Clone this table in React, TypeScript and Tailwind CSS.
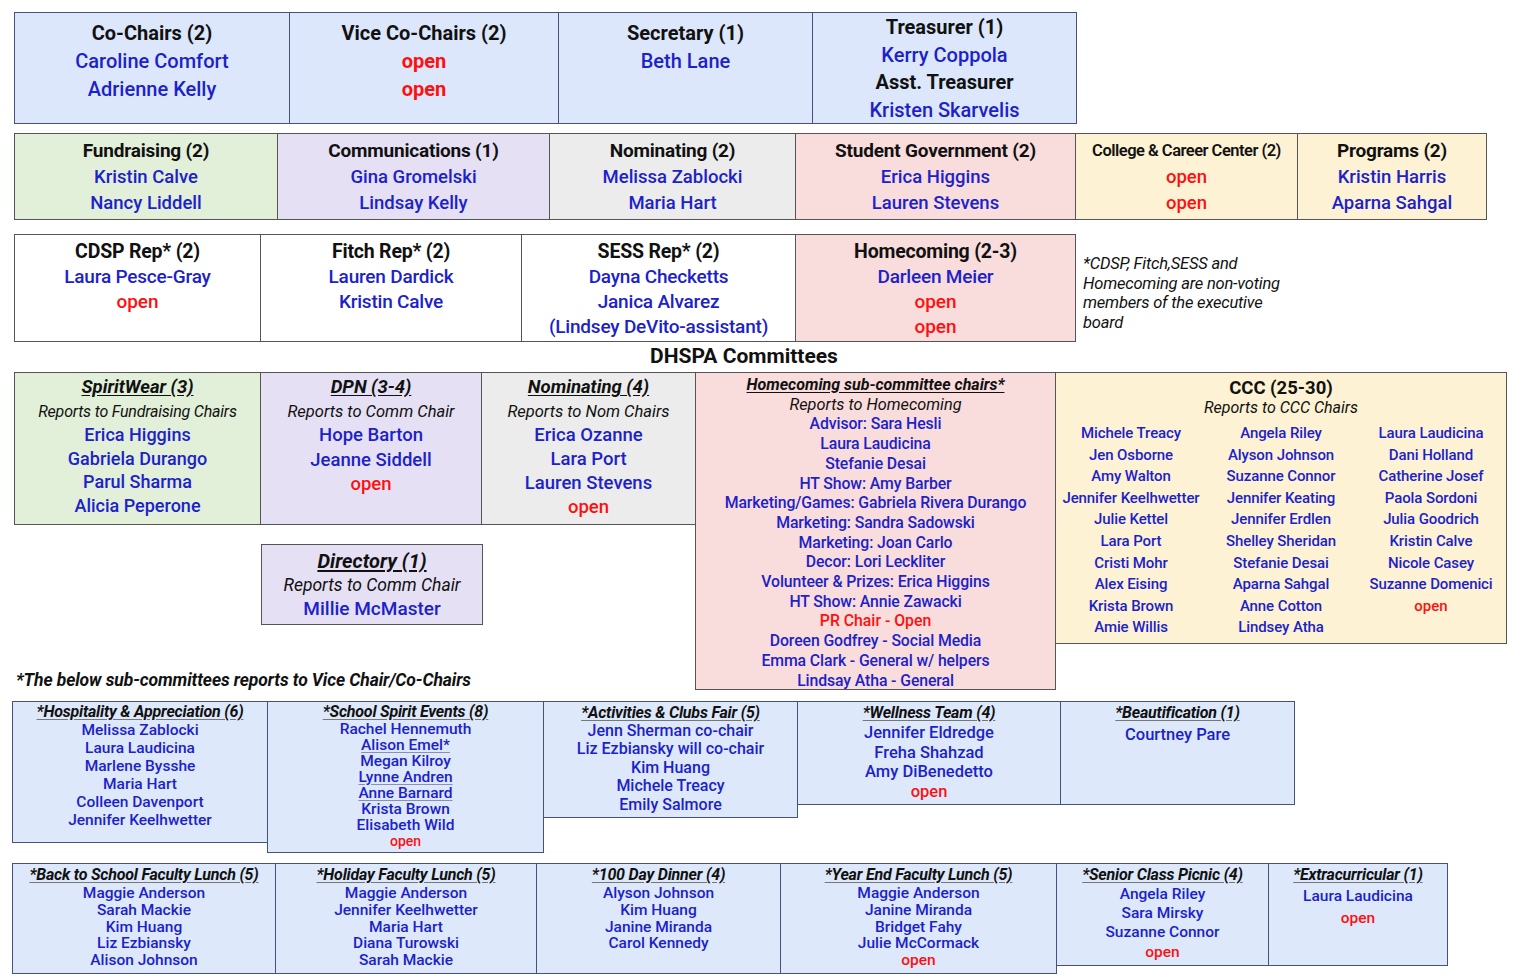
import React from "react";

const NAME = "text-[#1c22c9] font-medium";
const RED = "text-[#ff1010] font-medium";

type L = { t: string; k?: "h" | "n" | "o" | "s" | "u" };

function Lines({ lines, h, n, s, o }: { lines: L[]; h: string; n: string; s?: string; o?: string }) {
  return (
    <>
      {lines.map((l, i) => {
        const k = l.k ?? "n";
        let c = "";
        if (k === "h") c = h;
        else if (k === "s") c = s ?? n;
        else if (k === "o") c = (o ?? n) + " " + RED;
        else if (k === "u") c = n + " " + NAME + " underline decoration-[#8a8fb8] underline-offset-2";
        else c = n + " " + NAME;
        return (
          <div key={i} className={c + " whitespace-nowrap"}>
            {l.t}
          </div>
        );
      })}
    </>
  );
}

const nm = (t: string): L => ({ t });
const op: L = { t: "open", k: "o" };
const hd = (t: string): L => ({ t, k: "h" });
const sb = (t: string): L => ({ t, k: "s" });

export default function App() {
  const top = "border border-[#46527e] bg-[#dce7fb] text-center";
  const gbd = "border border-[#555]";
  const subBox = "border border-[#46527e] bg-[#dde8fb] text-center";
  const subH = "text-[16px] leading-[18px] font-bold italic underline decoration-[#777] underline-offset-2 text-[#111] tracking-[-0.2px]";

  return (
    <div className="w-[1521px] h-[979px] bg-white overflow-hidden font-['Roboto','Liberation_Sans',sans-serif] text-[#111]">
      {/* Row 1 */}
      <div className="flex ml-[14px] pt-[12px]">
        <div className={top + " w-[276px] h-[112px] pt-[6px]"}>
          <Lines h="text-[20px] leading-[28px] font-bold" n="text-[20px] leading-[28px]" lines={[hd("Co-Chairs (2)"), nm("Caroline Comfort"), nm("Adrienne Kelly")]} />
        </div>
        <div className={top + " -ml-px w-[270px] h-[112px] pt-[6px]"}>
          <Lines h="text-[20px] leading-[28px] font-bold" n="text-[20px] leading-[28px]" o="text-[20px] leading-[28px] !font-bold" lines={[hd("Vice Co-Chairs (2)"), op, op]} />
        </div>
        <div className={top + " -ml-px w-[255px] h-[112px] pt-[6px]"}>
          <Lines h="text-[20px] leading-[28px] font-bold" n="text-[20px] leading-[28px]" lines={[hd("Secretary (1)"), nm("Beth Lane")]} />
        </div>
        <div className={top + " -ml-px w-[265px] h-[112px] pt-[1px]"}>
          <Lines h="text-[20px] leading-[27.5px] font-bold" n="text-[20px] leading-[27.5px]" lines={[hd("Treasurer (1)"), nm("Kerry Coppola"), hd("Asst. Treasurer"), nm("Kristen Skarvelis")]} />
        </div>
      </div>

      {/* Row 2 */}
      <div className="flex ml-[14px] mt-[9px] items-start">
        {[
          { w: "w-[264px]", bg: "bg-[#e2efd9]", l: [hd("Fundraising (2)"), nm("Kristin Calve"), nm("Nancy Liddell")] },
          { w: "w-[273px]", bg: "bg-[#e5e0f4]", l: [hd("Communications (1)"), nm("Gina Gromelski"), nm("Lindsay Kelly")] },
          { w: "w-[247px]", bg: "bg-[#ececec]", l: [hd("Nominating (2)"), nm("Melissa Zablocki"), nm("Maria Hart")] },
          { w: "w-[281px]", bg: "bg-[#f9dcdc]", l: [hd("Student Government (2)"), nm("Erica Higgins"), nm("Lauren Stevens")] },
        ].map((b, i) => (
          <div key={i} className={gbd + " " + b.bg + " " + b.w + (i > 0 ? " -ml-px" : "") + " h-[87px] pt-[4px] text-center"}>
            <Lines h="text-[19px] leading-[26px] font-bold tracking-[-0.2px]" n="text-[18.5px] leading-[26px]" o="text-[18.5px] leading-[26px]" lines={b.l} />
          </div>
        ))}
        <div className={gbd + " bg-[#fdf2d4] w-[223px] -ml-px h-[87px] pt-[4px] text-center"}>
          <Lines h="text-[16.5px] leading-[26px] font-semibold tracking-[-0.5px]" n="text-[18.5px] leading-[26px]" o="text-[18.5px] leading-[26px]" lines={[hd("College & Career Center (2)"), op, op]} />
        </div>
        <div className={gbd + " bg-[#fdf2d4] w-[190px] -ml-px h-[87px] pt-[4px] text-center"}>
          <Lines h="text-[19px] leading-[26px] font-bold tracking-[-0.2px]" n="text-[18.5px] leading-[26px]" lines={[hd("Programs (2)"), nm("Kristin Harris"), nm("Aparna Sahgal")]} />
        </div>
      </div>

      {/* Row 3 */}
      <div className="flex ml-[14px] mt-[14px] items-start">
        {[
          { w: "w-[247px]", bg: "bg-white", l: [hd("CDSP Rep* (2)"), nm("Laura Pesce-Gray"), op] },
          { w: "w-[262px]", bg: "bg-white", l: [hd("Fitch Rep* (2)"), nm("Lauren Dardick"), nm("Kristin Calve")] },
          { w: "w-[275px]", bg: "bg-white", l: [hd("SESS Rep* (2)"), nm("Dayna Checketts"), nm("Janica Alvarez"), nm("(Lindsey DeVito-assistant)")] },
          { w: "w-[281px]", bg: "bg-[#f9dcdc]", l: [hd("Homecoming (2-3)"), nm("Darleen Meier"), op, op] },
        ].map((b, i) => (
          <div key={i} className={gbd + " " + b.bg + " " + b.w + (i > 0 ? " -ml-px" : "") + " h-[108px] pt-[4px] text-center"}>
            <Lines h="text-[19.5px] leading-[25px] font-bold tracking-[-0.2px]" n="text-[19px] leading-[25px] tracking-[-0.2px]" o="text-[19px] leading-[25px]" lines={b.l} />
          </div>
        ))}
        <div className="ml-[7px] mt-[20px] text-[16.5px] leading-[19.5px] italic text-[#111] tracking-[-0.2px]">
          *CDSP, Fitch,SESS and
          <br />
          Homecoming are non-voting
          <br />
          members of the executive
          <br />
          board
        </div>
      </div>

      {/* Title */}
      <div className="w-[1488px] h-[30px] flex items-center justify-center text-[21px] font-bold text-[#111]">
        DHSPA Committees
      </div>

      {/* Committees */}
      <div className="flex items-start ml-[14px]">
        <div className="flex flex-col">
          <div className="flex items-start">
            <div className={gbd + " bg-[#e2efd9] w-[247px] h-[153px] pt-[3px] text-center"}>
              <Lines h="text-[18.5px] leading-[23.6px] font-bold italic underline underline-offset-2" s="text-[16px] leading-[23.6px] italic tracking-[-0.2px]" n="text-[18px] leading-[23.6px]" lines={[hd("SpiritWear (3)"), sb("Reports to Fundraising Chairs"), nm("Erica Higgins"), nm("Gabriela Durango"), nm("Parul Sharma"), nm("Alicia Peperone")]} />
            </div>
            <div className={gbd + " bg-[#e5e0f4] -ml-px w-[222px] h-[153px] pt-[3px] text-center"}>
              <Lines h="text-[18.5px] leading-[23.6px] font-bold italic underline underline-offset-2" s="text-[16.5px] leading-[23.6px] italic" n="text-[18.5px] leading-[24.5px]" o="text-[18.5px] leading-[24.5px]" lines={[hd("DPN (3-4)"), sb("Reports to Comm Chair"), nm("Hope Barton"), nm("Jeanne Siddell"), op]} />
            </div>
            <div className={gbd + " bg-[#ececec] -ml-px w-[215px] h-[153px] pt-[3px] text-center"}>
              <Lines h="text-[18.5px] leading-[23.6px] font-bold italic underline underline-offset-2" s="text-[16.5px] leading-[23.6px] italic" n="text-[18.5px] leading-[24px]" o="text-[18.5px] leading-[24px]" lines={[hd("Nominating (4)"), sb("Reports to Nom Chairs"), nm("Erica Ozanne"), nm("Lara Port"), nm("Lauren Stevens"), op]} />
            </div>
          </div>
          <div className={gbd + " bg-[#e5e0f4] ml-[247px] mt-[19px] w-[222px] h-[81px] pt-[4px] text-center"}>
            <Lines h="text-[20px] leading-[24px] font-bold italic underline underline-offset-2" s="text-[17.5px] leading-[24px] italic" n="text-[19px] leading-[24px]" lines={[hd("Directory (1)"), sb("Reports to Comm Chair"), nm("Millie McMaster")]} />
          </div>
          <div className="ml-[2px] mt-[45px] text-[17.5px] leading-[20px] font-bold italic text-[#111] whitespace-nowrap tracking-[-0.1px]">
            *The below sub-committees reports to Vice Chair/Co-Chairs
          </div>
        </div>
        <div className={gbd + " bg-[#f9dcdc] -ml-px w-[361px] h-[318px] pt-[2px] text-center"}>
          <Lines
            h="text-[16px] leading-[19.7px] font-bold italic underline underline-offset-2"
            s="text-[16.3px] leading-[19.7px] italic"
            n="text-[15.8px] leading-[19.7px] tracking-[-0.1px]"
            o="text-[15.8px] leading-[19.7px]"
            lines={[
              hd("Homecoming sub-committee chairs*"),
              sb("Reports to Homecoming"),
              nm("Advisor: Sara Hesli"),
              nm("Laura Laudicina"),
              nm("Stefanie Desai"),
              nm("HT Show: Amy Barber"),
              nm("Marketing/Games: Gabriela Rivera Durango"),
              nm("Marketing: Sandra Sadowski"),
              nm("Marketing: Joan Carlo"),
              nm("Decor: Lori Leckliter"),
              nm("Volunteer & Prizes: Erica Higgins"),
              nm("HT Show: Annie Zawacki"),
              { t: "PR Chair - Open", k: "o" },
              nm("Doreen Godfrey - Social Media"),
              nm("Emma Clark - General w/ helpers"),
              nm("Lindsay Atha - General"),
            ]}
          />
        </div>
        <div className={gbd + " bg-[#fdf2d4] -ml-px w-[452px] h-[272px] pt-[5px] text-center"}>
          <div className="text-[18.5px] leading-[20px] font-bold">CCC (25-30)</div>
          <div className="text-[16px] leading-[20px] italic">Reports to CCC Chairs</div>
          <div className="grid grid-cols-3 mt-[5px]">
            {[
              ["Michele Treacy", "Jen Osborne", "Amy Walton", "Jennifer Keelhwetter", "Julie Kettel", "Lara Port", "Cristi Mohr", "Alex Eising", "Krista Brown", "Amie Willis"],
              ["Angela Riley", "Alyson Johnson", "Suzanne Connor", "Jennifer Keating", "Jennifer Erdlen", "Shelley Sheridan", "Stefanie Desai", "Aparna Sahgal", "Anne Cotton", "Lindsey Atha"],
              ["Laura Laudicina", "Dani Holland", "Catherine Josef", "Paola Sordoni", "Julia Goodrich", "Kristin Calve", "Nicole Casey", "Suzanne Domenici", "open"],
            ].map((col, ci) => (
              <div key={ci} className="flex flex-col items-center">
                <Lines
                  h=""
                  n="text-[15px] leading-[21.6px] tracking-[-0.1px]"
                  o="text-[15px] leading-[21.6px]"
                  lines={col.map((t) => (t === "open" ? op : nm(t)))}
                />
              </div>
            ))}
          </div>
        </div>
      </div>

      {/* Sub row 1 */}
      <div className="flex items-start ml-[12px] mt-[11px]">
        <div className={subBox + " w-[256px] h-[142px] pt-[1px]"}>
          <Lines h={subH} n="text-[15.5px] leading-[18px]" lines={[hd("*Hospitality & Appreciation (6)"), nm("Melissa Zablocki"), nm("Laura Laudicina"), nm("Marlene Bysshe"), nm("Maria Hart"), nm("Colleen Davenport"), nm("Jennifer Keelhwetter")]} />
        </div>
        <div className={subBox + " -ml-px w-[277px] h-[152px] pt-[1px]"}>
          <Lines h={subH} n="text-[15.5px] leading-[16px]" o="text-[14px] leading-[17px]" lines={[hd("*School Spirit Events (8)"), nm("Rachel Hennemuth"), { t: "Alison Emel*", k: "u" }, nm("Megan Kilroy"), { t: "Lynne Andren", k: "u" }, { t: "Anne Barnard", k: "u" }, nm("Krista Brown"), nm("Elisabeth Wild"), op]} />
        </div>
        <div className={subBox + " -ml-px w-[255px] h-[117px] pt-[2px]"}>
          <Lines h={subH} n="text-[16px] leading-[18.4px]" lines={[hd("*Activities & Clubs Fair (5)"), nm("Jenn Sherman co-chair"), nm("Liz Ezbiansky will co-chair"), nm("Kim Huang"), nm("Michele Treacy"), nm("Emily Salmore")]} />
        </div>
        <div className={subBox + " -ml-px w-[264px] h-[104px] pt-[2px]"}>
          <Lines h={subH + " mb-[1px]"} n="text-[16.5px] leading-[19.7px]" o="text-[16.5px] leading-[19.7px]" lines={[hd("*Wellness Team (4)"), nm("Jennifer Eldredge"), nm("Freha Shahzad"), nm("Amy DiBenedetto"), op]} />
        </div>
        <div className={subBox + " -ml-px w-[235px] h-[104px] pt-[2px]"}>
          <Lines h={subH + " mb-[3px]"} n="text-[16.5px] leading-[20px]" lines={[hd("*Beautification (1)"), nm("Courtney Pare")]} />
        </div>
      </div>

      {/* Sub row 2 */}
      <div className="flex items-start ml-[12px] mt-[10px]">
        <div className={subBox + " w-[264px] h-[111px] pt-[2px]"}>
          <Lines h={subH + " mb-[1px]"} n="text-[15.5px] leading-[16.8px]" lines={[hd("*Back to School Faculty Lunch (5)"), nm("Maggie Anderson"), nm("Sarah Mackie"), nm("Kim Huang"), nm("Liz Ezbiansky"), nm("Alison Johnson")]} />
        </div>
        <div className={subBox + " -ml-px w-[262px] h-[111px] pt-[2px]"}>
          <Lines h={subH + " mb-[1px]"} n="text-[15.5px] leading-[16.8px]" lines={[hd("*Holiday Faculty Lunch (5)"), nm("Maggie Anderson"), nm("Jennifer Keelhwetter"), nm("Maria Hart"), nm("Diana Turowski"), nm("Sarah Mackie")]} />
        </div>
        <div className={subBox + " -ml-px w-[245px] h-[111px] pt-[2px]"}>
          <Lines h={subH + " mb-[1px]"} n="text-[15.5px] leading-[16.8px]" lines={[hd("*100 Day Dinner (4)"), nm("Alyson Johnson"), nm("Kim Huang"), nm("Janine Miranda"), nm("Carol Kennedy")]} />
        </div>
        <div className={subBox + " -ml-px w-[277px] h-[111px] pt-[2px]"}>
          <Lines h={subH + " mb-[1px]"} n="text-[15.5px] leading-[16.8px]" o="text-[15.5px] leading-[16.8px]" lines={[hd("*Year End Faculty Lunch (5)"), nm("Maggie Anderson"), nm("Janine Miranda"), nm("Bridget Fahy"), nm("Julie McCormack"), op]} />
        </div>
        <div className={subBox + " -ml-px w-[213px] h-[103px] pt-[2px]"}>
          <Lines h={subH + " mb-[1px]"} n="text-[15.5px] leading-[19px]" o="text-[15.5px] leading-[21px]" lines={[hd("*Senior Class Picnic (4)"), nm("Angela Riley"), nm("Sara Mirsky"), nm("Suzanne Connor"), op]} />
        </div>
        <div className={subBox + " -ml-px w-[180px] h-[103px] pt-[2px]"}>
          <Lines h={subH + " mb-[2px]"} n="text-[15.5px] leading-[21px]" o="text-[15.5px] leading-[23px]" lines={[hd("*Extracurricular (1)"), nm("Laura Laudicina"), op]} />
        </div>
      </div>
    </div>
  );
}
